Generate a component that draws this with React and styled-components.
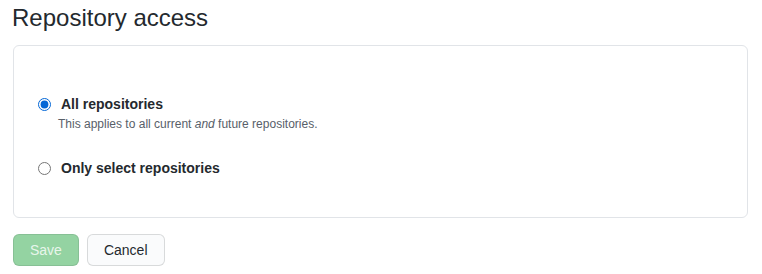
import React, { useState } from 'react'
import styled, { createGlobalStyle } from 'styled-components'

const GlobalStyle = createGlobalStyle`
  body {
    margin: 0;
    padding: 0 14px 0 13px;
    background: #fff;
    color: #24292e;
    font-family: "Liberation Sans", Arial, sans-serif;
    font-size: 14px;
  }
`

const Title = styled.h2`
  margin: 3px 0 12px -1px;
  font-size: 24px;
  font-weight: 400;
  line-height: 30px;
  color: #24292e;
`

const Box = styled.div`
  border: 1px solid #e1e4e8;
  border-radius: 6px;
  padding: 48px 24px 38px;
  display: flex;
  flex-direction: column;
  gap: 25px;
`

const Option = styled.div`
  display: flex;
  flex-direction: column;
`

const Label = styled.label`
  display: flex;
  align-items: center;
  font-weight: 700;
  font-size: 14px;
  line-height: 21px;
  color: #24292e;
  cursor: pointer;
`

const Radio = styled.input`
  width: 13px;
  height: 13px;
  margin: 0 10px 0 0;
  accent-color: #0366d6;
`

const Note = styled.p`
  margin: 0 0 0 20px;
  font-size: 12px;
  line-height: 18px;
  color: #586069;
`

const Actions = styled.div`
  display: flex;
  gap: 8px;
  margin-top: 16px;
`

const Button = styled.button`
  height: 32px;
  padding: 5px 16px;
  font-family: inherit;
  font-size: 14px;
  line-height: 20px;
  border-radius: 6px;
  border: 1px solid ${p => (p.$primary ? 'rgba(27,31,35,0.1)' : 'rgba(27,31,35,0.15)')};
  background: ${p => (p.$primary ? '#94d3a2' : '#fafbfc')};
  color: ${p => (p.$primary ? 'rgba(255,255,255,0.8)' : '#24292e')};
  cursor: ${p => (p.disabled ? 'default' : 'pointer')};
`

const App = () => {
  const [scope, setScope] = useState('all')

  return (
    <>
      <GlobalStyle />
      <Title>Repository access</Title>
      <Box>
        <Option>
          <Label>
            <Radio type="radio" name="scope" checked={scope === 'all'} onChange={() => setScope('all')} />
            All repositories
          </Label>
          <Note>This applies to all current <em>and</em> future repositories.</Note>
        </Option>
        <Option>
          <Label>
            <Radio type="radio" name="scope" checked={scope === 'select'} onChange={() => setScope('select')} />
            Only select repositories
          </Label>
        </Option>
      </Box>
      <Actions>
        <Button $primary disabled>Save</Button>
        <Button>Cancel</Button>
      </Actions>
    </>
  )
}

export default App
